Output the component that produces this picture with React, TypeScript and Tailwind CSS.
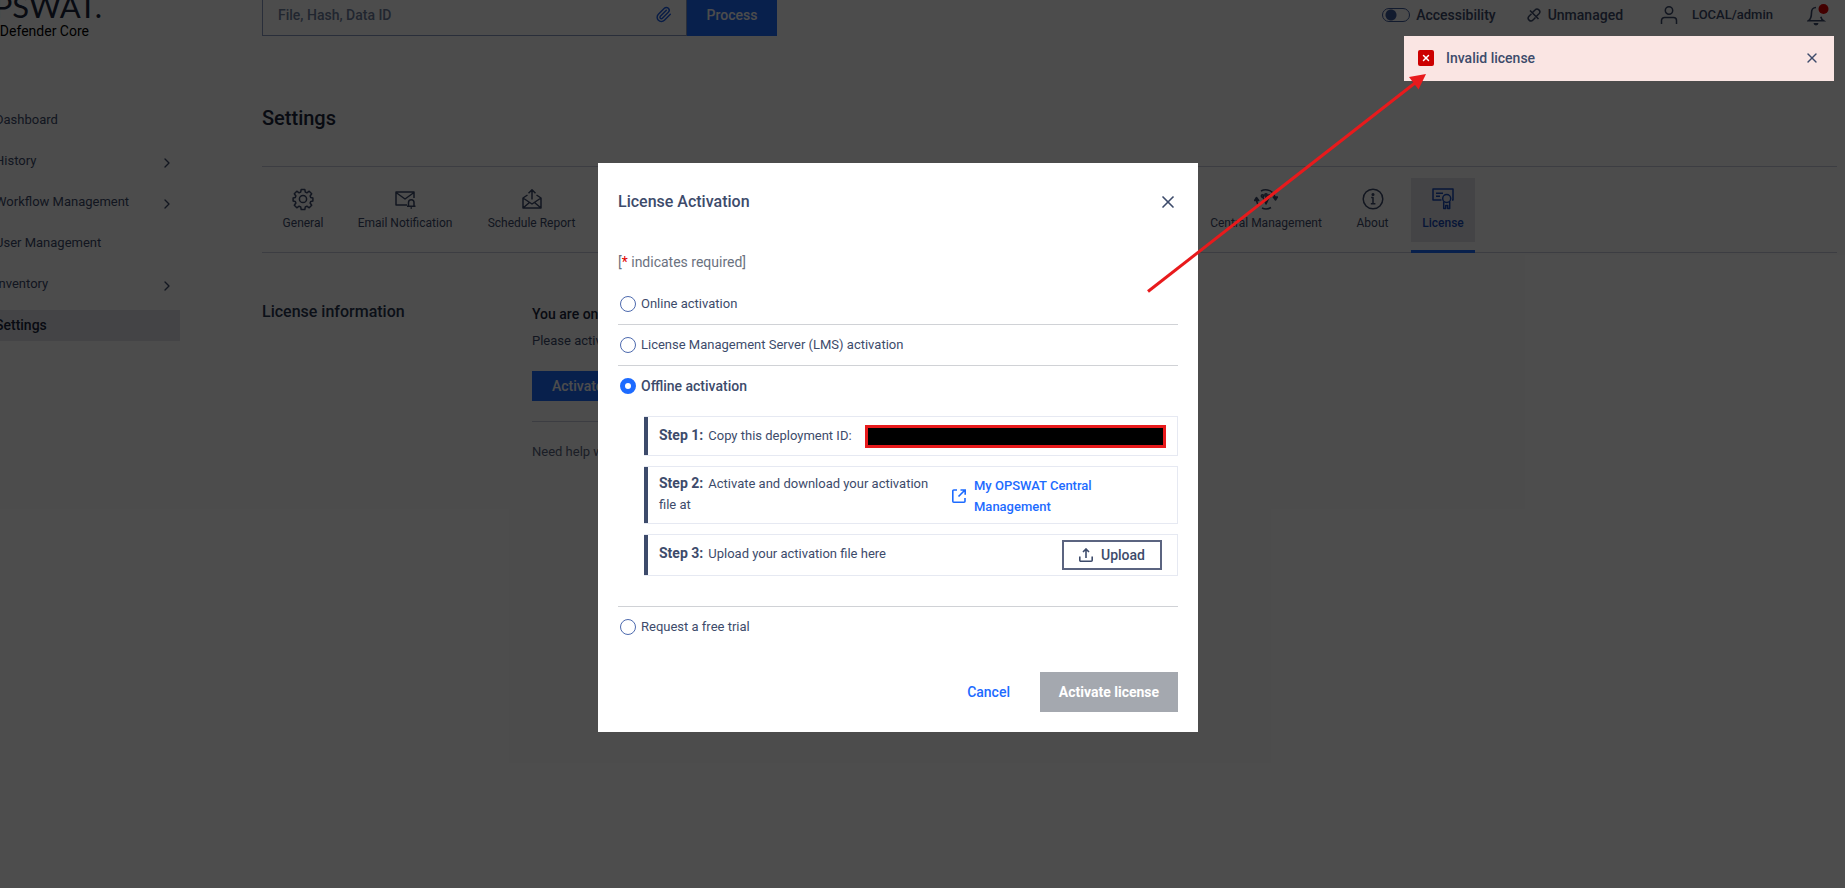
import { useState } from "react";
import type { ReactNode } from "react";
import { ChevronRight, Paperclip, X } from "lucide-react";

const navItems = [
  { label: "Dashboard", expandable: false },
  { label: "History", expandable: true },
  { label: "Workflow Management", expandable: true },
  { label: "User Management", expandable: false },
  { label: "Inventory", expandable: true },
  { label: "Settings", expandable: false, active: true },
];

function TabIcon({ children }: { children: ReactNode }) {
  return (
    <svg
      width="24"
      height="24"
      viewBox="0 0 24 24"
      fill="none"
      stroke="currentColor"
      strokeWidth="1.5"
      strokeLinejoin="round"
      aria-hidden="true"
      className="shrink-0"
    >
      {children}
    </svg>
  );
}

function GearIcon() {
  return (
    <TabIcon>
      <circle cx="12" cy="12" r="3.6" />
      <path d="M10.2 2.4h3.6l.5 2.7 1.6.7 2.3-1.6 2.5 2.5-1.6 2.3.7 1.6 2.1.4v3l-2.1.4-.7 1.6 1.6 2.3-2.5 2.5-2.3-1.6-1.6.7-.5 2.7h-3.6l-.5-2.7-1.6-.7-2.3 1.6-2.5-2.5L4.9 16l-.7-1.6-2.1-.4v-3l2.1-.4.7-1.6-1.6-2.3 2.5-2.5 2.3 1.6 1.6-.7z" />
    </TabIcon>
  );
}

function MailBellIcon() {
  return (
    <TabIcon>
      <path d="M14 18H3V5h18v6M3 5.500l9 6.500 9-6.500" />
      <path d="M14 19.300h8.500M15.500 19v-3.500a2.700 2.700 0 0 1 5.500 0V19M17.500 21h1.500" />
    </TabIcon>
  );
}

function MailUpIcon() {
  return (
    <TabIcon>
      <path d="M7.500 8L3 11v10h18V11l-4.500-3M3 11l9 6 9-6M3 21l6.500-5.500M21 21l-6.500-5.500M12 12.500V3M8.500 6.300L12 2.800l3.500 3.500" />
    </TabIcon>
  );
}

function CentralIcon() {
  return (
    <TabIcon>
      <path d="M7 4a9.500 9.500 0 0 1 14 6.500M17 20.500a9.500 9.500 0 0 1-9 .5M5.500 19A9.500 9.500 0 0 1 2.500 11" />
      <path d="M.5 13.500l2-3 2.200 3zM19.300 10l2.200 3 2-3z" fill="currentColor" />
      <path d="M8.500 9.500L12 17l3.500-7.500M12 10v5" />
      <circle cx="8.500" cy="9" r="1.200" />
      <circle cx="12" cy="8" r="1.200" />
      <circle cx="15.500" cy="9" r="1.200" />
    </TabIcon>
  );
}

function AboutIcon() {
  return (
    <TabIcon>
      <circle cx="12" cy="12" r="9.800" />
      <path d="M10.200 10.500H12V16.500M9.800 16.700h4.600" />
      <circle cx="12" cy="7.500" r=".8" fill="currentColor" />
    </TabIcon>
  );
}

function CertificateIcon() {
  return (
    <TabIcon>
      <path d="M10.500 13H2V2h20v11h-1M5 6.200h7M5 9.200h4" />
      <circle cx="15.700" cy="11.500" r="4" />
      <path d="M12.700 14.500V21.500h2v-3h2v3h2v-7" />
    </TabIcon>
  );
}

function Tab({
  label,
  icon,
  active = false,
  className = "",
}: {
  label: string;
  icon: ReactNode;
  active?: boolean;
  className?: string;
}) {
  return (
    <button
      type="button"
      className={`flex h-[75px] flex-col border-b-[3px] ${
        active ? "border-[#1d6bff] font-medium text-[#1a4bb8]" : "border-transparent text-[#3d4b6b]"
      } ${className}`}
    >
      <span
        className={`flex h-16 w-full flex-col items-center px-[10px] pt-[9px] ${
          active ? "bg-[#e3e5ec]" : ""
        }`}
      >
        {icon}
        <span className="pt-1 text-xs leading-4 whitespace-nowrap">{label}</span>
      </span>
    </button>
  );
}

function ActivationOption({
  label,
  checked,
  onSelect,
  value,
}: {
  label: string;
  checked: boolean;
  onSelect: (value: string) => void;
  value: string;
}) {
  return (
    <label
      className={`flex h-10 items-center gap-[5px] pl-[2px] text-[#3d4b6b] ${
        checked ? "text-sm font-medium" : "text-[13px]"
      }`}
    >
      <input
        type="radio"
        name="activation"
        value={value}
        checked={checked}
        onChange={() => onSelect(value)}
        className="size-4 shrink-0 appearance-none rounded-full border border-[#4d6aae] bg-white checked:border-5 checked:border-[#1d6bff]"
      />
      {label}
    </label>
  );
}

function Step({ children, className }: { children: ReactNode; className: string }) {
  return (
    <li className="flex border border-l-0 border-[#e6e9f2] text-[13px] leading-[21px] text-[#3d4b6b]">
      <span className="w-1 shrink-0 bg-[#3d4b6b]" />
      <div className={`flex min-w-0 flex-1 pl-[11px] ${className}`}>{children}</div>
    </li>
  );
}

export default function App() {
  const [option, setOption] = useState("offline");

  return (
    <div className="relative h-screen overflow-hidden bg-white font-[Roboto,sans-serif] text-sm text-[#3d4b6b]">
      <header className="-mt-2 flex h-11">
        <div className="flex w-[262px] shrink-0 flex-col">
          <div className="mb-[3px] flex w-[102px] justify-end font-[Lato,sans-serif] text-[31px] leading-7 text-[#1b273c]">
            OPSWAT.
          </div>
          <div className="flex w-[89px] justify-end leading-4 whitespace-nowrap text-black">MetaDefender Core</div>
        </div>
        <div className="flex w-[515px] shrink-0">
          <div className="flex flex-1 items-center border border-[#8a9bc4] pr-[14px]">
            <input
              type="text"
              aria-label="File, Hash, Data ID"
              placeholder="File, Hash, Data ID"
              className="h-full min-w-0 flex-1 pt-px pl-[15px] font-medium outline-none placeholder:text-[#707f9f]"
            />
            <button type="button" aria-label="Attach file" className="pt-px text-[#1d5fe8]">
              <Paperclip size={17} strokeWidth={2} />
            </button>
          </div>
          <button type="button" className="w-[90px] bg-[#1d6bff] pt-[2px] font-medium text-white">
            Process
          </button>
        </div>
        <div className="flex flex-1 items-center justify-end pt-[2px] pr-[16px] font-medium">
          <label className="flex items-center gap-[6px]">
            <input
              type="checkbox"
              role="switch"
              className="h-[14px] w-7 appearance-none rounded-full border border-[#3d5a9c] bg-[radial-gradient(circle_at_8px_6px,#3d5a9c_5px,transparent_6px)]"
            />
            Accessibility
          </label>
          <button type="button" className="ml-[31px] flex items-center gap-[7px]">
            <svg width="14" height="14" viewBox="0 0 14 14" fill="none" stroke="currentColor" strokeWidth="1.5" aria-hidden="true">
              <path d="M5.500 4.500L8 2a2.600 2.600 0 0 1 4 3.800L9.500 8.300M8.500 9.500L6 12A2.600 2.600 0 0 1 2 8.200L4.500 5.700M3 2.500l8.500 8.500" />
            </svg>
            Unmanaged
          </button>
          <button type="button" className="ml-[37px] flex items-center gap-[14px] text-[13px]">
            <svg width="18" height="18" viewBox="0 0 18 18" fill="none" stroke="currentColor" strokeWidth="1.5" aria-hidden="true">
              <circle cx="9" cy="4.500" r="3.700" />
              <path d="M1.500 18v-3.500a3 3 0 0 1 3-3h9a3 3 0 0 1 3 3V18" />
            </svg>
            LOCAL/admin
          </button>
          <button type="button" aria-label="Notifications" className="ml-[34px]">
            <svg width="22" height="22" viewBox="0 0 22 22" fill="none" stroke="currentColor" strokeWidth="1.6" aria-hidden="true">
              <path d="M9 3.500c-3 0-4.500 2.200-4.500 5.200 0 4-.8 6.300-3 8h15c-1.500-1-2.300-2.300-2.700-4" />
              <path d="M6.500 19h5a2.500 2.500 0 0 1-5 0z" fill="currentColor" stroke="none" />
              <circle cx="16.500" cy="5" r="5" fill="#e00000" stroke="none" />
            </svg>
          </button>
        </div>
      </header>

      <div className="flex">
        <nav aria-label="Main" className="w-[262px] shrink-0 pt-[69px]">
          <ul className="flex w-[180px] flex-col gap-[10px]">
            {navItems.map((item) => (
              <li key={item.label}>
                <a
                  href="#"
                  className={`flex h-[31px] items-center justify-between pr-[5px] ${
                    item.active ? "bg-[#e3e5ec] pb-px text-sm font-medium text-[#1b273c]" : "text-[13px]"
                  }`}
                >
                  <span className="-ml-[5px] whitespace-nowrap">{item.label}</span>
                  {item.expandable && <ChevronRight size={16} strokeWidth={2} className="mt-[2px]" />}
                </a>
              </li>
            ))}
          </ul>
        </nav>

        <main className="min-w-0 flex-1 pr-[8px]">
          <h1 className="pt-[70px] text-[20px] leading-6 font-medium text-[#1b273c]">Settings</h1>

          <div className="mt-9 flex h-[87px] gap-3 border-y border-[#c9cede] pt-[11px] pl-[10px]">
            <Tab label="General" icon={<GearIcon />} className="w-[62px]" />
            <Tab label="Email Notification" icon={<MailBellIcon />} className="w-[118px]" />
            <Tab label="Schedule Report" icon={<MailUpIcon />} className="w-[111px]" />
            <Tab label="Central Management" icon={<CentralIcon />} className="ml-[599px] w-[136px]" />
            <Tab label="About" icon={<AboutIcon />} className="w-[53px]" />
            <Tab label="License" icon={<CertificateIcon />} active className="w-16" />
          </div>

          <div className="flex pt-[47px]">
            <h2 className="w-[270px] shrink-0 text-base leading-6 font-medium text-[#2b3852]">License information</h2>
            <section className="w-[600px] pt-1">
              <p className="leading-[21px] font-medium text-[#1b273c]">You are on</p>
              <p className="pt-[5px] text-[13px] leading-[21px]">Please activate</p>
              <button
                type="button"
                className="mt-5 flex h-[30px] items-center bg-[#1d6bff] px-5 font-medium text-white"
              >
                Activate
              </button>
              <hr className="mt-5 border-[#c9cede]" />
              <p className="pt-[19px] text-[13px] leading-[21px] text-[#5a6680]">Need help with</p>
            </section>
          </div>
        </main>
      </div>

      <div className="absolute inset-0 flex items-start justify-center bg-black/70 pt-[163px] pr-[49px]">
        <div role="dialog" aria-modal="true" aria-labelledby="dialog-title" className="w-[600px] bg-white px-5 pb-5">
          <div className="flex items-center justify-between pt-[27px]">
            <h2 id="dialog-title" className="text-base leading-6 font-medium">
              License Activation
            </h2>
            <button type="button" aria-label="Close" className="text-[#3d4b6b]">
              <X size={20} strokeWidth={2} />
            </button>
          </div>

          <p className="pt-9 text-sm leading-6 text-[#6b7280]">
            [<span className="text-[#e00000]">*</span> indicates required]
          </p>

          <form className="pt-[10px]" onSubmit={(event) => event.preventDefault()}>
            <ActivationOption label="Online activation" value="online" checked={option === "online"} onSelect={setOption} />
            <hr className="border-[#d0d2d6]" />
            <ActivationOption
              label="License Management Server (LMS) activation"
              value="lms"
              checked={option === "lms"}
              onSelect={setOption}
            />
            <hr className="border-[#d0d2d6]" />
            <ActivationOption label="Offline activation" value="offline" checked={option === "offline"} onSelect={setOption} />

            <ol className="flex flex-col gap-[10px] pt-[10px] pb-[30px] pl-[26px]">
              <Step className="h-[38px] items-center justify-between pr-[11px]">
                <p className="pb-[2px]">
                  <strong className="mr-[5px] text-sm font-bold">Step 1:</strong>Copy this deployment ID:
                </p>
                <span className="h-[23px] w-[301px] border-3 border-[#e81a1c] bg-black" />
              </Step>
              <Step className="h-14 pr-10">
                <p className="w-[293px] pt-[6px] pr-3">
                  <strong className="mr-[5px] text-sm leading-[21px] font-bold">Step 2:</strong>Activate and download your activation file at
                </p>
                <a href="#" className="flex w-[160px] items-center gap-2 pt-[2px] text-[13px] font-medium text-[#1d6bff]">
                  <svg width="14" height="14" viewBox="0 0 14 14" fill="none" stroke="currentColor" strokeWidth="1.6" aria-hidden="true" className="shrink-0">
                    <path d="M5 1H1.800a1 1 0 0 0-1 1v10.200a1 1 0 0 0 1 1H12a1 1 0 0 0 1-1V9M8.500 1h4.700v4.700M13 1L6.500 7.500" />
                  </svg>
                  My OPSWAT Central Management
                </a>
              </Step>
              <Step className="h-10 items-center justify-between pr-[15px]">
                <p className="pb-1">
                  <strong className="mr-[5px] text-sm font-bold">Step 3:</strong>Upload your activation file here
                </p>
                <button
                  type="button"
                  className="flex h-[30px] w-[100px] items-center justify-center gap-2 border-2 border-[#5b6480] text-sm font-medium text-[#3d4b6b]"
                >
                  <svg width="14" height="14" viewBox="0 0 14 14" fill="none" stroke="currentColor" strokeWidth="1.6" aria-hidden="true">
                    <path d="M.8 8.500v3.700a1 1 0 0 0 1 1h10.400a1 1 0 0 0 1-1V8.500M7 10V1M4 4l3-3 3 3" />
                  </svg>
                  Upload
                </button>
              </Step>
            </ol>

            <hr className="border-[#d0d2d6]" />
            <ActivationOption label="Request a free trial" value="trial" checked={option === "trial"} onSelect={setOption} />

            <div className="flex items-center justify-end gap-[30px] pt-[25px]">
              <button type="button" className="font-medium text-[#1d6bff]">
                Cancel
              </button>
              <button type="submit" disabled className="h-10 w-[138px] bg-[#a4a8af] font-bold text-white">
                Activate license
              </button>
            </div>
          </form>
        </div>
      </div>

      <div role="alert" className="absolute top-9 right-[11px] flex h-[45px] w-[430px] items-center bg-[#fae5e3] px-[14px] pb-px font-medium">
        <span className="flex size-4 items-center justify-center rounded-xs bg-[#cc0000] text-white">
          <X size={10} strokeWidth={3.5} />
        </span>
        <span className="flex-1 pb-px pl-3">Invalid license</span>
        <button type="button" aria-label="Dismiss" className="text-[#3d4b6b]">
          <X size={16} strokeWidth={2} />
        </button>
      </div>

      <svg
        width="280"
        height="220"
        viewBox="0 0 280 220"
        aria-hidden="true"
        className="pointer-events-none absolute top-[73px] right-[418px]"
      >
        <path d="M1 218.500L268 10" stroke="#e81a1c" strokeWidth="3" fill="none" />
        <path d="M279 1L262 4l9.500 12.500z" fill="#e81a1c" />
      </svg>
    </div>
  );
}
